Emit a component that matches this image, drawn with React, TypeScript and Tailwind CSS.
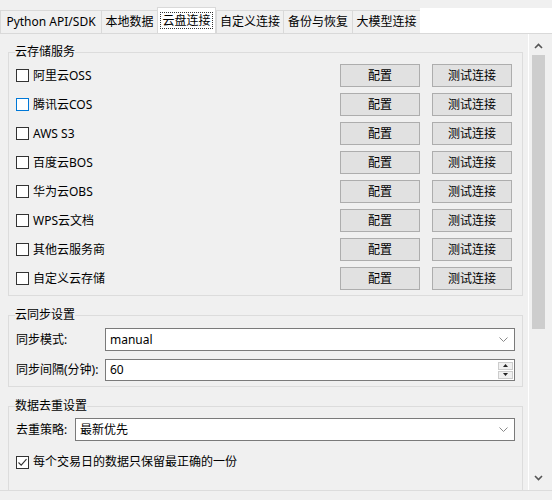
import React from "react";

const tabs = [
  { label: "Python API/SDK", w: "w-[101px]" },
  { label: "本地数据", w: "w-[56px]" },
  { label: "云盘连接", w: "w-[59px]" },
  { label: "自定义连接", w: "w-[67px]" },
  { label: "备份与恢复", w: "w-[69px]" },
  { label: "大模型连接", w: "w-[68px]" },
];

const providers = [
  "阿里云OSS",
  "腾讯云COS",
  "AWS S3",
  "百度云BOS",
  "华为云OBS",
  "WPS云文档",
  "其他云服务商",
  "自定义云存储",
];

function CheckBox({ checked = false, hover = false }: { checked?: boolean; hover?: boolean }) {
  return (
    <span
      className={`flex h-[13px] w-[13px] shrink-0 items-center justify-center border bg-white ${
        hover ? "border-[#0078d7]" : "border-[#333333]"
      }`}
    >
      {checked && (
        <svg width="11" height="11" viewBox="0 0 11 11" fill="none">
          <path d="M1.5 5.5 L4.2 8.2 L9.5 2.2" stroke="#333" strokeWidth="1.1" />
        </svg>
      )}
    </span>
  );
}

function Button({ label }: { label: string }) {
  return (
    <button className="h-[23px] w-[80px] border border-[#adadad] bg-[#e1e1e1] text-[12px] leading-[16px] text-black">
      {label}
    </button>
  );
}

function Combo({ value }: { value: string }) {
  return (
    <div className="flex h-[23px] flex-1 items-center border border-[#7a7a7a] bg-white pl-[4px] pr-[6px]">
      <span className="flex-1 text-[12px] leading-[16px]">{value}</span>
      <svg width="9" height="5" viewBox="0 0 9 5" fill="none">
        <path d="M0.5 0.5 L4.5 4.5 L8.5 0.5" stroke="#888" strokeWidth="1" />
      </svg>
    </div>
  );
}

function SpinBox({ value }: { value: string }) {
  return (
    <div className="flex h-[22px] flex-1 items-center border border-[#7a7a7a] bg-white pl-[4px] pr-[1px]">
      <span className="flex-1 text-[12px] leading-[16px]">{value}</span>
      <div className="flex flex-col gap-[1px]">
        <span className="flex h-[8px] w-[15px] items-center justify-center border border-[#cccccc] bg-[#f0f0f0]">
          <svg width="5" height="3" viewBox="0 0 5 3">
            <path d="M0 3 L2.5 0 L5 3 Z" fill="#222" />
          </svg>
        </span>
        <span className="flex h-[8px] w-[15px] items-center justify-center border border-[#cccccc] bg-[#f0f0f0]">
          <svg width="5" height="3" viewBox="0 0 5 3">
            <path d="M0 0 L2.5 3 L5 0 Z" fill="#222" />
          </svg>
        </span>
      </div>
    </div>
  );
}

function Group({ title, className = "", children }: { title: string; className?: string; children: React.ReactNode }) {
  return (
    <fieldset className={`border border-[#dcdcdc] px-[7px] ${className}`}>
      <legend className="-ml-[1px] px-0 text-[12px] leading-[16px]">{title}</legend>
      {children}
    </fieldset>
  );
}

export default function App() {
  return (
    <div
      className="flex h-[500px] w-[552px] flex-col overflow-hidden bg-[#f0f0f0] text-black"
      style={{ fontFamily: '"Noto Sans", "Noto Sans CJK SC", sans-serif' }}
    >
      {/* tab bar */}
      <div className="mt-[8px] flex h-[26px] items-end border-b border-[#d9d9d9] bg-white">
        <div className="flex h-full items-end bg-[#f0f0f0]">
          {tabs.map((t, i) =>
            i === 2 ? (
              <div
                key={t.label}
                className={`flex h-[26px] items-center justify-center border border-b-0 border-[#d9d9d9] bg-white ${t.w}`}
              >
                <span className="border border-dotted border-[#333] px-[1px] text-[12px] leading-[15px]">
                  {t.label}
                </span>
              </div>
            ) : (
              <div
                key={t.label}
                className={`flex h-[23px] items-center justify-center border border-b-0 border-r-0 border-[#d9d9d9] bg-[#f0f0f0] text-[12px] leading-[16px] ${t.w}`}
              >
                {t.label}
              </div>
            )
          )}
        </div>
      </div>

      {/* scroll area */}
      <div className="flex h-[457px] border-b border-[#dcdcdc]">
        <div className="w-[528px] overflow-hidden pl-[8px] pr-[5px]">
          <Group title="云存储服务" className="mt-[10px] pb-[5px] pt-[4px]">
            <div className="flex flex-col gap-[6px]">
              {providers.map((p, i) => (
                <div key={p} className="flex h-[23px] items-center">
                  <CheckBox hover={i === 1} />
                  <span className="ml-[4px] flex-1 text-[12px] leading-[16px]">{p}</span>
                  <div className="mr-[3px] flex gap-[12px]">
                    <Button label="配置" />
                    <Button label="测试连接" />
                  </div>
                </div>
              ))}
            </div>
          </Group>

          <Group title="云同步设置" className="mt-[11px] pb-[5px] pt-[5px]">
            <div className="flex flex-col gap-[8px]">
              <div className="flex items-center">
                <span className="w-[89px] text-[12px] leading-[16px]">同步模式:</span>
                <Combo value="manual" />
              </div>
              <div className="flex items-center">
                <span className="w-[89px] text-[12px] leading-[16px]">同步间隔(分钟):</span>
                <SpinBox value="60" />
              </div>
            </div>
          </Group>

          <Group title="数据去重设置" className="mt-[11px] pb-[30px] pt-[4px]">
            <div className="flex items-center">
              <span className="w-[59px] text-[12px] leading-[16px]">去重策略:</span>
              <Combo value="最新优先" />
            </div>
            <div className="mt-[13px] flex items-center">
              <CheckBox checked />
              <span className="ml-[4px] text-[12px] leading-[16px]">每个交易日的数据只保留最正确的一份</span>
            </div>
          </Group>
        </div>

        {/* vertical scrollbar */}
        <div className="flex w-[19px] flex-col items-center border-l border-[#ffffff] bg-[#f0f0f0]">
          <svg className="mt-[9px]" width="9" height="6" viewBox="0 0 9 6" fill="none">
            <path d="M1 5 L4.5 1.5 L8 5" stroke="#555" strokeWidth="1.6" />
          </svg>
          <div className="mt-[6px] h-[274px] w-[13px] bg-[#cdcdcd]" />
          <div className="flex-1" />
          <svg className="mb-[9px]" width="9" height="6" viewBox="0 0 9 6" fill="none">
            <path d="M1 1 L4.5 4.5 L8 1" stroke="#555" strokeWidth="1.6" />
          </svg>
        </div>
        <div className="flex-1" />
      </div>
    </div>
  );
}
